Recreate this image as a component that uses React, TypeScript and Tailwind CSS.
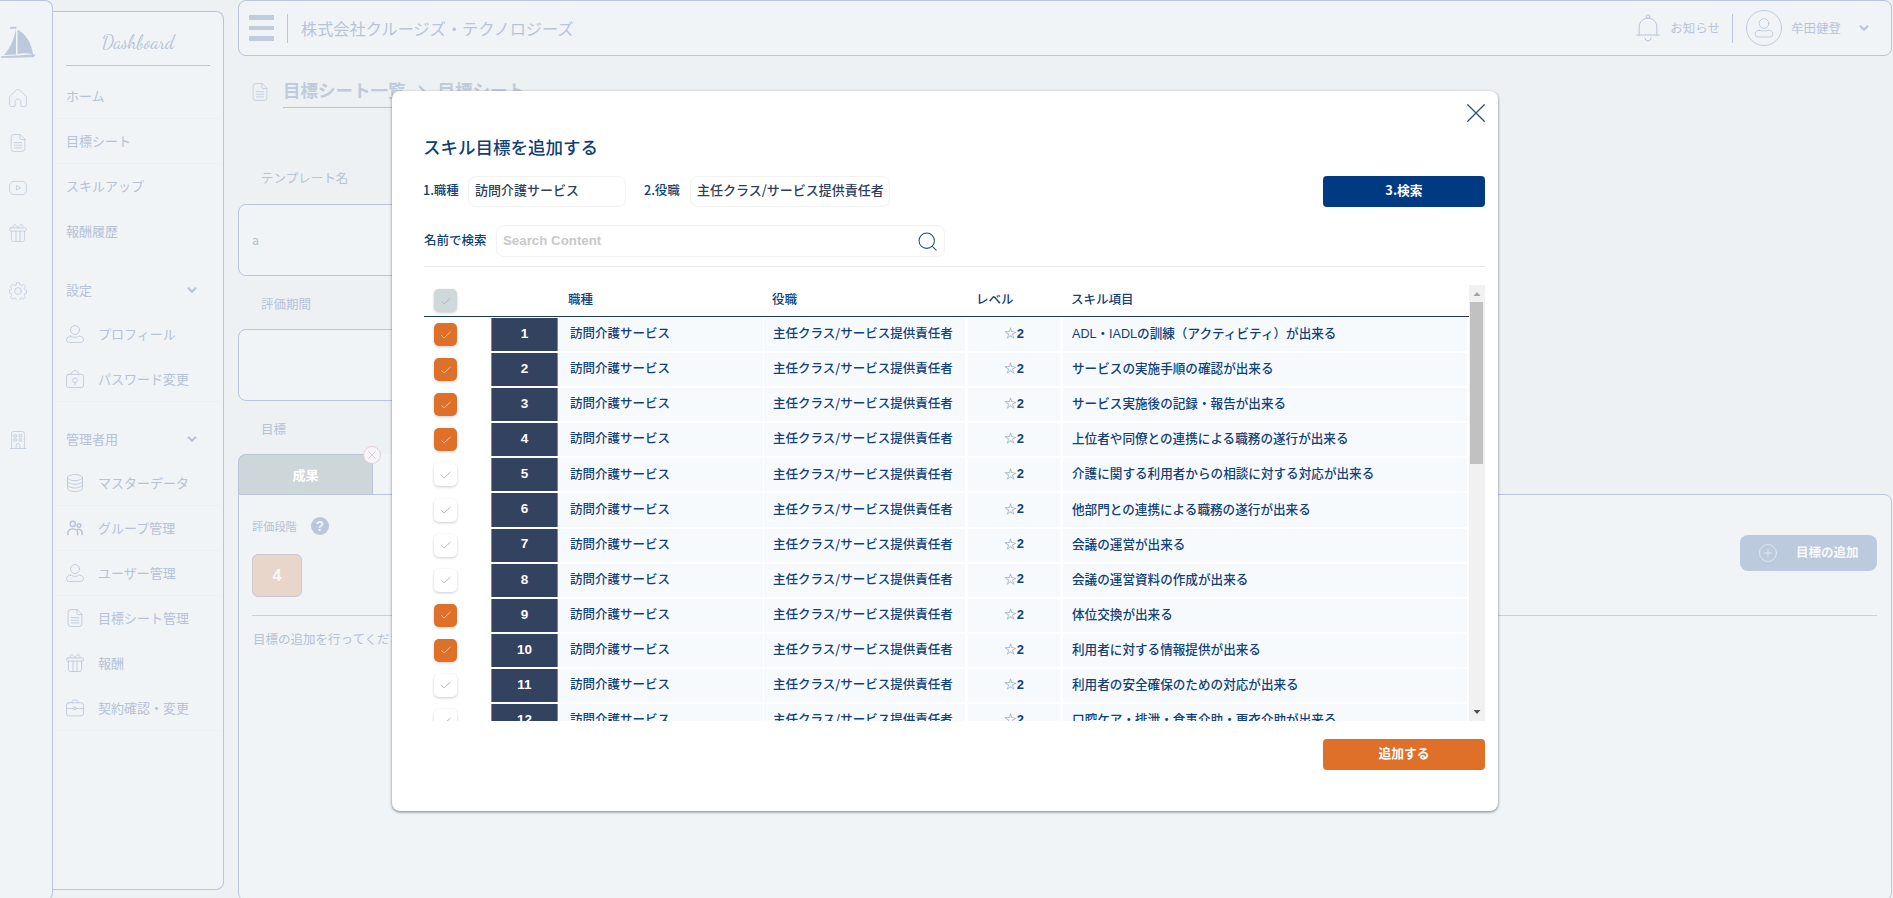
import React, { useState } from 'react';

type IconProps = { className?: string; stroke?: number };

const Icon: React.FC<IconProps & { children: React.ReactNode }> = ({ className = 'size-[18px]', stroke = 1, children }) => (
  <svg viewBox="0 0 24 24" fill="none" stroke="currentColor" strokeWidth={stroke} strokeLinecap="round" strokeLinejoin="round" className={`shrink-0 ${className}`}>
    {children}
  </svg>
);

const HomeIcon = (p: IconProps) => (
  <Icon {...p}>
    <path d="M.7 11.2c0-.9.4-1.7 1.1-2.300l8.300-7.600c1.100-1 2.700-1 3.800 0l8.300 7.600c.7.6 1.100 1.400 1.100 2.300v10.300c0 1-.8 1.800-1.800 1.800h-4.900c-.5 0-.8-.4-.8-.8V17c0-2.100-1.700-3.800-3.800-3.800S8.200 14.900 8.200 17v5.500c0 .5-.4.8-.8.8H2.500c-1 0-1.800-.8-1.800-1.800z" />
  </Icon>
);

const DocIcon = (p: IconProps) => (
  <Icon {...p}>
    <path d="M14.500.7H6.500a3.700 3.700 0 0 0-3.700 3.700v15.200a3.700 3.700 0 0 0 3.700 3.700h11a3.700 3.700 0 0 0 3.700-3.700V7.400z" />
    <path d="M14.500.7v5.200c0 .8.7 1.500 1.500 1.500h5.200M7 11.500h10M7 15h10M7 18.500h10" />
  </Icon>
);

const PlayIcon = (p: IconProps) => (
  <Icon {...p}>
    <rect x=".7" y="3.200" width="22.600" height="17.600" rx="5.500" />
    <path d="M10 9.300v5.400l5-2.700z" />
  </Icon>
);

const GiftIcon = (p: IconProps) => (
  <Icon {...p}>
    <rect x=".7" y="5.200" width="22.600" height="4.300" rx="2" />
    <path d="M3.200 9.500v11c0 1.500 1.200 2.800 2.800 2.800h12c1.500 0 2.800-1.200 2.800-2.800v-11M9.300 9.500v13.800M14.700 9.500v13.800M12 5.200C10.500 1.500 8 .4 6.500 1.200 5 2 5 4 6.800 5.200M12 5.200c1.500-3.700 4-4.800 5.500-4C19 2 19 4 17.200 5.200" />
  </Icon>
);

const GearIcon = (p: IconProps) => (
  <Icon {...p}>
    <circle cx="12" cy="12" r="4.500" />
    <path d="M10 .8h4l.5 3 2.400 1 2.500-1.800 2.800 2.900-1.800 2.400 1 2.300 2 .4v3.900l-2 .5-1 2.400 1.800 2.400-2.800 2.800-2.500-1.800-2.400 1-.5 3h-4l-.5-3-2.400-1L4.600 23l-2.800-2.800 1.800-2.400-1-2.400-2-.5V11l2-.4 1-2.300L1.800 5.900 4.600 3l2.500 1.800 2.400-1z" />
  </Icon>
);

const BuildingIcon = (p: IconProps) => (
  <Icon {...p}>
    <path d="M3.500 23V3A2.300 2.300 0 0 1 5.800.7h12.400A2.300 2.300 0 0 1 20.500 3v20M1.500 23.300h21M9.500 23v-4a2.500 2.500 0 0 1 5 0v4M7 5h3v3H7zM14 5h3v3h-3zM7 10.500h3v3H7zM14 10.500h3v3h-3z" />
  </Icon>
);

const UserIcon = (p: IconProps) => (
  <Icon {...p}>
    <circle cx="12" cy="6.700" r="6" />
    <path d="M6 14.700c1.800 1.100 3.800 1.700 6 1.700s4.200-.6 6-1.700c3 .3 5.300 2.300 5.300 4.800 0 2.100-1.500 3.800-3.800 3.800h-15C2.200 23.300.7 21.600.7 19.500c0-2.500 2.300-4.500 5.300-4.800z" />
  </Icon>
);

// header avatar: flatter shoulders than UserIcon
const AvatarIcon = () => (
  <Icon className="size-[20px]">
    <circle cx="12" cy="6.500" r="5.800" />
    <path d="M6.500 14.800c3.500 1 7.500 1 11 0 3 0 5 1.600 5 4 0 2.600-1.400 4-3.700 4H5.200c-2.300 0-3.700-1.400-3.700-4 0-2.400 2-4 5-4z" />
  </Icon>
);

const LockIcon = (p: IconProps) => (
  <Icon {...p}>
    <rect x=".7" y="5.700" width="22.600" height="17.600" rx="3" />
    <path d="M7 5.700C7 2.700 9 .7 12 .7s5 2 5 5M12 19.500v-3M10.300 16.300c-1-.6-1.500-1.500-1.500-2.500a3.200 3.200 0 0 1 6.400 0c0 1-.5 1.900-1.500 2.500z" />
  </Icon>
);

const DatabaseIcon = (p: IconProps) => (
  <Icon {...p}>
    <ellipse cx="12" cy="4.800" rx="10" ry="4.100" />
    <path d="M2 4.800v14.400c0 2.300 4.500 4.100 10 4.100s10-1.800 10-4.100V4.800M2 9.600c0 2.300 4.500 4.100 10 4.100s10-1.800 10-4.100M2 14.400c0 2.300 4.500 4.100 10 4.100s10-1.800 10-4.100" />
  </Icon>
);

const GroupIcon = (p: IconProps) => (
  <Icon {...p} stroke={1.9}>
    <circle cx="9" cy="6.500" r="3.400" />
    <circle cx="17.300" cy="8.800" r="2.400" />
    <path d="M2.500 21v-2.500c0-3 2.700-5.300 6.500-5.300s6.500 2.300 6.500 5.300V21M15.500 14c3.500-.6 6 1.300 6 4.300V21" />
  </Icon>
);

const BriefcaseIcon = (p: IconProps) => (
  <Icon {...p}>
    <rect x=".7" y="5" width="22.600" height="17.500" rx="3" />
    <path d="M8 5V3.500c0-1.100.9-2 2-2h4c1.100 0 2 .9 2 2V5M.7 12.500h9.500M13.800 12.500h9.500" />
    <circle cx="12" cy="12.500" r="1.800" />
  </Icon>
);

const BellIcon = () => (
  <svg viewBox="0 0 24 28" fill="none" stroke="currentColor" strokeWidth="1" strokeLinecap="round" className="h-7 w-6 shrink-0">
    <circle cx="12" cy="2.500" r="1.800" />
    <path d="M.8 21h22.400M3.200 21v-8.200C3.200 8 7 4.300 12 4.300s8.800 3.700 8.800 8.500V21M8.800 24c.3 1.700 1.600 2.900 3.200 2.900s2.900-1.200 3.200-2.900" />
  </svg>
);

const Chevron: React.FC<{ className?: string }> = ({ className = '' }) => (
  <svg viewBox="0 0 10 6" fill="none" stroke="currentColor" strokeWidth="2" className={`h-1.5 w-2.5 shrink-0 ${className}`}>
    <path d="M1 .8 5 4.800 9 .8" />
  </svg>
);

const SailLogo = () => (
  <svg viewBox="0 0 36 34" fill="currentColor" className="h-[34px] w-9 shrink-0">
    <path d="M10 2.500c2-1.800 4 .3 6.500-1v2c-2 1-4-.5-6.500.5zM16 4v25.500L4 30c5.500-6 10-15 12-26zM17.500 4.500C26 9 31.500 18 33 29.500c-5-1.500-10-1.500-15.500-.5zM.5 31.200 17 30.600l18.500-1.300-2 3L2 33z" />
  </svg>
);

const topMenu = ['ホーム', '目標シート', 'スキルアップ', '報酬履歴'];

const settingMenu = [
  { label: 'プロフィール', icon: UserIcon, line: false },
  { label: 'パスワード変更', icon: LockIcon, line: true },
];

const adminMenu = [
  { label: 'マスターデータ', icon: DatabaseIcon, line: true },
  { label: 'グループ管理', icon: GroupIcon, line: true },
  { label: 'ユーザー管理', icon: UserIcon, line: true },
  { label: '目標シート管理', icon: DocIcon, line: false },
  { label: '報酬', icon: GiftIcon, line: false },
  { label: '契約確認・変更', icon: BriefcaseIcon, line: true },
];

const skills = [
  'ADL・IADLの訓練（アクティビティ）が出来る',
  'サービスの実施手順の確認が出来る',
  'サービス実施後の記録・報告が出来る',
  '上位者や同僚との連携による職務の遂行が出来る',
  '介護に関する利用者からの相談に対する対応が出来る',
  '他部門との連携による職務の遂行が出来る',
  '会議の運営が出来る',
  '会議の運営資料の作成が出来る',
  '体位交換が出来る',
  '利用者に対する情報提供が出来る',
  '利用者の安全確保のための対応が出来る',
  '口腔ケア・排泄・食事介助・更衣介助が出来る',
];

const IconRail = () => (
  <nav className="flex h-[901px] w-[53px] shrink-0 flex-col rounded-r-lg border-y border-r border-[#bac5da] bg-[#f0f4f7] pt-[24px] text-[#bdc8db]">
    <SailLogo />
    <div className="mt-[16px] ml-[9px] flex flex-col">
      <div className="flex h-[45px] items-center"><HomeIcon /></div>
      <div className="flex h-[45px] items-center"><DocIcon /></div>
      <div className="flex h-[45px] items-center"><PlayIcon /></div>
      <div className="flex h-[45px] items-center"><GiftIcon /></div>
      <div className="mt-[13px] flex h-[45px] items-center"><GearIcon /></div>
      <div className="mt-[104px] flex h-[45px] items-center"><BuildingIcon /></div>
    </div>
  </nav>
);

const SubItem: React.FC<{ label: string; icon: React.FC<IconProps>; line: boolean }> = ({ label, icon: ItemIcon, line }) => (
  <li className={`mx-[3px] flex h-[45px] items-center gap-[14px] border-b pl-[10px] ${line ? 'border-[#ebf0f3]' : 'border-transparent'}`}>
    <ItemIcon />
    <span>{label}</span>
  </li>
);

const Sidebar = () => (
  <aside className="mt-[11px] h-[879px] w-[171px] shrink-0 rounded-r-lg border-y border-r border-[#bac5da] bg-[#f0f4f7] text-[13px] text-[#b6c2d6]">
    <div className="mx-[13px] flex h-[54px] items-center justify-center border-b border-[#bac5da] pt-2">
      <span className="font-['Dancing_Script','Pacifico',cursive] text-[18.500px]">Dashboard</span>
    </div>
    <ul className="pt-[8px]">
      {topMenu.map((label, i) => (
        <li key={label} className={`mx-[3px] flex h-[45px] items-center border-b pl-[10px] ${i < 2 ? 'border-[#ebf0f3]' : 'border-transparent'}`}>{label}</li>
      ))}
      <li className="mt-[13px] flex h-[45px] items-center justify-between pr-[26px] pl-[13px]">
        設定 <Chevron />
      </li>
      {settingMenu.map(item => <SubItem key={item.label} {...item} />)}
      <li className="mt-[14px] flex h-[45px] items-center justify-between pr-[26px] pl-[13px]">
        管理者用 <Chevron />
      </li>
      {adminMenu.map(item => <SubItem key={item.label} {...item} />)}
    </ul>
  </aside>
);

const Header = () => (
  <header className="flex h-14 items-center rounded-lg border border-[#bac5da] bg-[#f0f4f7] pr-[22px] pl-[10px] text-[#b8c4d7]">
    <div className="flex flex-col gap-[6px]">
      <span className="h-[4.500px] w-[25px] bg-[#c0cbdc]" />
      <span className="h-[4.500px] w-[25px] bg-[#c0cbdc]" />
      <span className="h-[4.500px] w-[25px] bg-[#c0cbdc]" />
    </div>
    <span className="ml-[13px] h-[29px] w-px bg-[#bac5da]" />
    <h1 className="ml-[13px] text-[16.200px]">株式会社クルージズ・テクノロジーズ</h1>
    <div className="ml-auto flex items-center text-[12.500px]">
      <BellIcon />
      <span className="ml-[10px]">お知らせ</span>
      <span className="ml-[12px] h-[29px] w-px bg-[#bac5da]" />
      <span className="ml-[13px] flex size-9 items-center justify-center rounded-full border border-[#c0cbdd]">
        <AvatarIcon />
      </span>
      <span className="ml-[9px]">牟田健登</span>
      <Chevron className="ml-[18px]" />
    </div>
  </header>
);

const GoalSheet = () => (
  <main className="text-[12.500px] text-[#b6c2d5]">
    <div className="flex h-[69px] pt-[18px]">
      <DocIcon className="mt-[9px] ml-[13px] size-[18px] text-[#bdc8db]" />
      <div className="ml-[14px] flex h-[34px] items-center border-b border-[#bac5da] text-[17.500px] font-bold text-[#bfcadb]">
        目標シート一覧
        <svg viewBox="0 0 8 12" fill="none" stroke="currentColor" strokeWidth="2.200" className="mx-3 h-3 w-2">
          <path d="m1 1 5 5-5 5" />
        </svg>
        目標シート
      </div>
    </div>
    <p className="mt-[41px] ml-[23px] h-[24px] leading-6">テンプレート名</p>
    <div className="mt-[14px] flex h-[72px] w-[810px] items-center rounded-lg border border-[#bac5da] bg-[#f0f4f7] pl-[13px]">a</div>
    <p className="mt-[16px] ml-[23px] h-[24px] leading-6">評価期間</p>
    <div className="mt-[13px] h-[72px] w-[810px] rounded-lg border border-[#bac5da] bg-[#f0f4f7]" />
    <p className="mt-[16px] ml-[23px] h-[24px] leading-6">目標</p>
    <div className="mt-[13px] flex h-10">
      <div className="relative flex w-[135px] items-center justify-center rounded-tl-lg border-t border-r border-l border-[#bac5da] bg-[#cdd6d9] text-[13px] font-bold text-white">
        成果
        <span className="absolute -top-[9px] -right-[9px] flex size-[18px] items-center justify-center rounded-full border border-[#e3cfd6] bg-[#f6f6f8] text-[#d8c2cb]">
          <Icon className="size-2" stroke={2.500}>
            <path d="M2 2l20 20M22 2 2 22" />
          </Icon>
        </span>
      </div>
      <div className="w-[135px] rounded-tr-lg bg-[#f0f4f7]" />
    </div>
    <div className="h-[407px] rounded-tr-lg rounded-b-lg border border-[#bac5da] bg-[#f0f4f7] pr-[14px] pl-[13px]">
      <div className="flex h-[121px] justify-between border-b border-[#c6d0de]">
        <div>
          <div className="mt-[22px] flex items-center gap-[14px] text-[11.200px]">
            評価段階
            <span className="flex size-[18px] items-center justify-center rounded-full bg-[#bac6d9] font-['Liberation_Sans',sans-serif] text-[14px] font-bold text-[#f0f4f7]">?</span>
          </div>
          <div className="mt-[19px] flex h-[43px] w-[50px] items-center justify-center rounded-md border border-[#c9c9cf] bg-[#e8d6cb] font-['Liberation_Sans',sans-serif] text-[16px] font-bold text-[#f8f8f8]">4</div>
        </div>
        <button className="mt-[40px] flex h-9 w-[137px] items-center rounded-lg bg-[#bccadd] pl-[19px] text-[12.500px] font-bold text-[#f7f9fb]">
          <Icon className="size-[18px] text-[#e6ecf3]" stroke={1.1}>
            <circle cx="12" cy="12" r="11.300" />
            <path d="M12 7v10M7 12h10" />
          </Icon>
          <span className="ml-[19px] pb-px">目標の追加</span>
        </button>
      </div>
      <p className="mt-[11px] pl-px leading-6">目標の追加を行ってください</p>
    </div>
  </main>
);

const CheckBox: React.FC<{ tone: string; mark: string; onClick?: () => void }> = ({ tone, mark, onClick }) => (
  <button onClick={onClick} className={`flex size-[23px] shrink-0 items-center justify-center rounded-[5px] shadow-[0_1px_3px_rgba(0,0,0,0.2)] ${tone}`}>
    <Icon className={`size-[10px] ${mark}`} stroke={2}>
      <path d="M1.500 13.500 7.500 19 22 5.500" />
    </Icon>
  </button>
);

const SkillTable = () => {
  const [checked, setChecked] = useState<number[]>([1, 2, 3, 4, 9, 10]);

  const toggle = (no: number) => {
    setChecked(prev => (prev.includes(no) ? prev.filter(n => n !== no) : [...prev, no]));
  };

  return (
    <div className="mt-[18px] flex h-[436px] w-[1061px] overflow-hidden text-[12.500px] font-medium text-[#134078]">
      <div className="w-[1045px] overflow-hidden">
        <div className="flex h-8 items-center border-b border-[#1b3c5c]">
          <div className="w-[144px] pl-[10px]">
            <CheckBox tone="bg-[#cfd9dc]" mark="text-[#a9b4b8]" />
          </div>
          <div className="w-[204px] pb-[3px]">職種</div>
          <div className="w-[204px] pb-[3px]">役職</div>
          <div className="w-[95px] pb-[3px]">レベル</div>
          <div className="pb-[3px]">スキル項目</div>
        </div>
        {skills.map((skill, i) => {
          const no = i + 1;
          const on = checked.includes(no);
          return (
            <div key={no} className="flex h-[35.100px] items-stretch pt-[1px] pb-[1px]">
              <div className="flex w-[67px] items-center pl-[10px]">
                <CheckBox
                  tone={on ? 'bg-[#de7029]' : 'bg-white'}
                  mark={on ? 'text-[#f7d9c3]' : 'text-[#a8a8a8]'}
                  onClick={() => toggle(no)}
                />
              </div>
              <div className="flex w-[67px] items-center justify-center border-x border-[#7d879b] bg-[#32425f] pb-px font-['Liberation_Sans',sans-serif] text-[13.500px] font-bold text-white">{no}</div>
              <div className="flex w-[205px] items-center bg-[#f6fafd] pb-0.5 pl-[12px]">訪問介護サービス</div>
              <div className="ml-[1px] flex w-[201px] items-center bg-[#f6fafd] pb-0.5 pl-[9px] whitespace-nowrap">主任クラス/サービス提供責任者</div>
              <div className="ml-[3px] flex w-[92px] items-center justify-center bg-[#f6fafd] pb-0.5">
                <span className="text-[#7f97b3]">☆</span>
                <span className="font-['Liberation_Sans',sans-serif] text-[13px] font-bold">2</span>
              </div>
              <div className="ml-[3px] flex w-[404px] items-center bg-[#f6fafd] pl-[9px] font-['Liberation_Sans','Noto_Sans_CJK_JP',sans-serif] text-[12.600px] whitespace-nowrap">{skill}</div>
            </div>
          );
        })}
      </div>
      <div className="flex w-4 flex-col items-center bg-[#f1f1f1]">
        <svg viewBox="0 0 16 17" className="h-[17px] w-4 shrink-0" fill="#a3a3a3"><path d="M4.500 11h7L8 7z" /></svg>
        <div className="mr-px h-[162px] w-[13px] bg-[#c1c1c1]" />
        <svg viewBox="0 0 16 17" className="mt-auto h-[17px] w-4 shrink-0" fill="#505050"><path d="M4.500 6h7L8 10z" /></svg>
      </div>
    </div>
  );
};

const SkillModal = () => (
  <div className="absolute top-[91px] left-[392px] h-[720px] w-[1106px] rounded-lg bg-white pl-8 text-[12.500px] font-medium text-[#0f3f78] shadow-[0_1px_3px_rgba(0,0,0,0.5)]">
    <div className="flex h-[43px] justify-end pt-[13px] pr-[13px]">
      <Icon className="size-[18px] text-[#2b527f]" stroke={1.700}>
        <path d="M1 1l22 22M23 1 1 23" />
      </Icon>
    </div>
    <h2 className="-ml-px h-[26px] text-[17.500px] leading-[26px]">スキル目標を追加する</h2>
    <div className="mt-[16px] flex h-[31px] w-[1061px] items-center">
      <span className="-ml-px w-[45px] pb-0.5 whitespace-nowrap">1.職種</span>
      <div className="flex h-[31px] w-[158px] items-center rounded-lg border border-[#f2f2f2] pb-[3px] pl-[6px] text-[13px] text-[#2f3f5c]">訪問介護サービス</div>
      <span className="ml-[18px] w-[46px] pb-0.5 whitespace-nowrap">2.役職</span>
      <div className="flex h-[31px] w-[200px] items-center rounded-lg border border-[#f2f2f2] pb-[3px] pl-[6px] text-[13px] whitespace-nowrap text-[#2f3f5c]">主任クラス/サービス提供責任者</div>
      <button className="ml-auto h-[31px] w-[162px] rounded bg-[#003a83] pb-[3px] text-[12.800px] font-bold text-white">3.検索</button>
    </div>
    <div className="mt-[18px] flex h-8 items-center">
      <span className="w-[72px] pb-px">名前で検索</span>
      <div className="flex h-8 w-[449px] items-center justify-between rounded-lg border border-[#f2f2f2] pr-[7px] pl-[6px]">
        <span className="font-['Liberation_Sans',sans-serif] text-[13.300px] font-bold text-[#c9c9c9]">Search Content</span>
        <Icon className="size-[19px] text-[#2b4a72]" stroke={1.300}>
          <circle cx="11" cy="11" r="9.700" />
          <path d="m18 18 5 5" />
        </Icon>
      </div>
    </div>
    <div className="mt-[9px] h-px w-[1061px] bg-[#e8eaec]" />
    <SkillTable />
    <div className="mt-[18px] flex w-[1061px] justify-end">
      <button className="h-[31px] w-[162px] rounded bg-[#de7029] pb-[3px] text-[12.800px] font-bold text-white">追加する</button>
    </div>
  </div>
);

export default function App() {
  return (
    <div className="relative flex h-[898px] w-full overflow-hidden bg-[#edf1f4] font-['Noto_Sans_CJK_JP',sans-serif]">
      <IconRail />
      <Sidebar />
      <div className="ml-[14px] w-[1654px] shrink-0">
        <Header />
        <GoalSheet />
      </div>
      <SkillModal />
    </div>
  );
}
